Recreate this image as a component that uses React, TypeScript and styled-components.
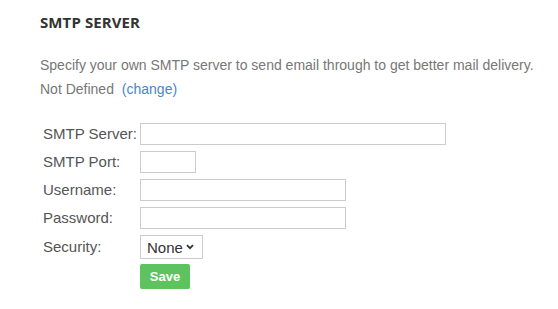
import React from "react";
import styled, { createGlobalStyle } from "styled-components";

const Global = createGlobalStyle`
  html, body { margin: 0; padding: 0; background: #fff; }
  body { font-family: "Liberation Sans", Arial, sans-serif; }
`;

const Page = styled.div`
  padding: 11px 0 0 40px;
`;

const Title = styled.h3`
  margin: 0;
  font-family: "Open Sans", "Liberation Sans", sans-serif;
  font-weight: 700;
  font-size: 15px;
  line-height: 22px;
  color: #333;
  letter-spacing: 0.1px;
`;

const Text = styled.p`
  margin: 0;
  font-size: 14px;
  line-height: 24px;
  color: #777;
  white-space: nowrap;
`;

const Desc = styled(Text)`
  margin-top: 20px;
`;

const Link = styled.a`
  color: #4a86c5;
  text-decoration: none;
  margin-left: 4px;
`;

const Form = styled.div`
  margin-top: 22px;
  display: grid;
  grid-template-columns: 97px auto;
  row-gap: 6px;
  padding-left: 3px;
  justify-items: start;
  align-items: center;
`;

const Label = styled.label`
  font-size: 15px;
  color: #555;
  line-height: 22px;
`;

const Input = styled.input<{ $w: number }>`
  box-sizing: border-box;
  width: ${(p) => p.$w}px;
  height: 22px;
  border: 1px solid #ccc;
  padding: 0 4px;
  margin: 0;
  font-size: 14px;
  outline: none;
`;

const SelectWrap = styled.div`
  position: relative;
  width: 63px;
  height: 24px;
`;

const Select = styled.select`
  box-sizing: border-box;
  appearance: none;
  -webkit-appearance: none;
  width: 63px;
  height: 24px;
  border: 1px solid #ccc;
  border-radius: 0;
  font-family: "Liberation Sans", Arial, sans-serif;
  font-size: 15px;
  color: #333;
  background: #fff;
  padding: 0 0 0 6px;
  margin: 0;
`;

const Chevron = styled.svg`
  position: absolute;
  right: 9px;
  top: 9px;
  width: 8px;
  height: 6px;
  pointer-events: none;
`;

const Button = styled.button`
  grid-column: 2;
  margin-top: -1px;
  width: 50px;
  height: 25px;
  border: none;
  border-radius: 2px;
  background: #5cc35f;
  color: #fff;
  font-family: "Liberation Sans", Arial, sans-serif;
  font-weight: 700;
  font-size: 13px;
  padding: 0;
`;

export default function App() {
  return (
    <>
      <Global />
      <Page>
        <Title>SMTP SERVER</Title>
        <Desc>Specify your own SMTP server to send email through to get better mail delivery.</Desc>
        <Text>
          Not Defined <Link href="#">(change)</Link>
        </Text>
        <Form>
          <Label>SMTP Server:</Label>
          <Input $w={306} />
          <Label>SMTP Port:</Label>
          <Input $w={56} />
          <Label>Username:</Label>
          <Input $w={206} />
          <Label>Password:</Label>
          <Input $w={206} type="password" />
          <Label>Security:</Label>
          <SelectWrap>
            <Select defaultValue="none">
              <option value="none">None</option>
              <option value="ssl">SSL</option>
              <option value="tls">TLS</option>
            </Select>
            <Chevron viewBox="0 0 8 6">
              <path d="M1 1.2 L4 4.2 L7 1.2" fill="none" stroke="#333" strokeWidth="1.8" />
            </Chevron>
          </SelectWrap>
          <Button>Save</Button>
        </Form>
      </Page>
    </>
  );
}
